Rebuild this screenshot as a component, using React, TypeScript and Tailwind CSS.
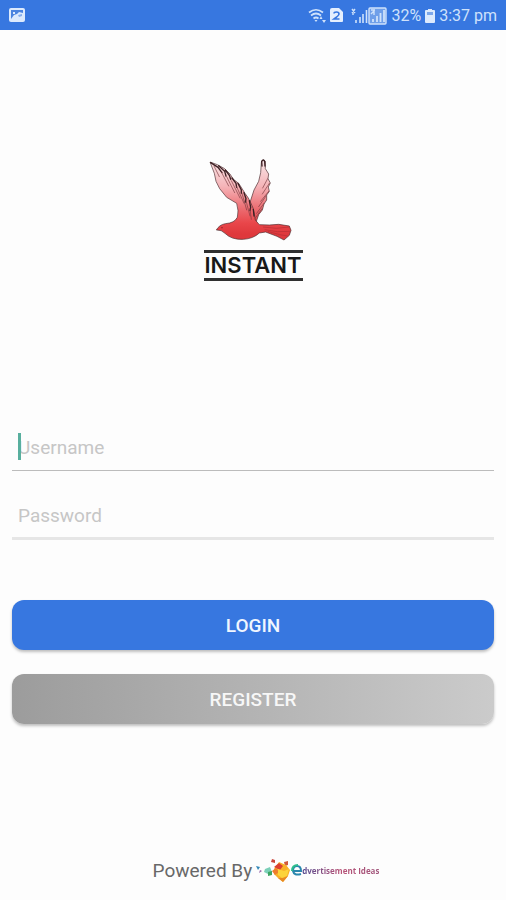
import React from "react";

function StatusBar() {
  return (
    <header className="flex h-[30px] items-center justify-between bg-[#3777e0] pt-0.5 pr-[9px] pl-[9px] text-[#cfe2fb]">
      <svg className="h-4 w-4" viewBox="0 0 16 16" role="img" aria-label="Screenshot saved">
        <rect x="0" y="0" width="16" height="14" rx="2" fill="#dceafd" />
        <path d="M2 2h12v3l-4-1-2 2-3 1-3 4z" fill="#4b84df" />
        <path d="M4 4h2v2H4z" fill="#dceafd" />
        <path d="M9 7l4-1v2l-3 1z" fill="#86aeec" />
      </svg>
      <div className="flex items-center gap-1">
        <svg className="h-4 w-[18px]" viewBox="0 0 18 16" fill="none" stroke="currentColor" role="img" aria-label="Wi-Fi">
          <path d="M1 4.500q7-5.500 14 0M3 7.500q5-4 10 0M5.500 10.500q2.500-2 5 0" strokeWidth="1.700" />
          <path d="M6.500 12h3L8 14z" fill="currentColor" stroke="none" />
          <path d="M11.500 11l1.500-3 1.500 3zM14 12h4l-2 3z" fill="currentColor" stroke="none" />
        </svg>
        <svg className="h-4 w-[13px]" viewBox="0 0 13 16" role="img" aria-label="SIM 2">
          <path d="M2 0h7l4 4v9a1 1 0 0 1-1 1H1a1 1 0 0 1-1-1V2a2 2 0 0 1 2-2z" fill="#e4effe" />
          <path d="M4 5.500Q4 4 6.500 4T9 6q0 1.500-5 5h5.500" fill="none" stroke="#3777e0" strokeWidth="1.600" />
        </svg>
        <svg className="ml-1 h-[18px] w-9" viewBox="0 0 36 18" fill="none" stroke="currentColor" role="img" aria-label="Mobile signal">
          <path d="M5 13v3M9 10v6M12 7v9M15.500 3v13" strokeWidth="1.600" />
          <path d="M1 2l3 4M4 2L1 6M2 6v2" strokeWidth="1.400" />
          <rect x="18" y="1" width="17" height="16" rx="1" fill="#6f9fe9" strokeWidth="1.400" />
          <path d="M22 12v3M26 9v6M29.500 6v9M33 3v12" strokeWidth="1.800" />
          <path d="M20 3h4M20 7l3-3v4" strokeWidth="1.400" />
        </svg>
        <span className="text-[16px] leading-5">32%</span>
        <svg className="h-[15px] w-[10px]" viewBox="0 0 10 15" role="img" aria-label="Battery">
          <path d="M3 0h4v1h2a1 1 0 0 1 1 1v11a1 1 0 0 1-1 1H1a1 1 0 0 1-1-1V2a1 1 0 0 1 1-1h2z" fill="#dceafd" />
          <path d="M2 3h6v3H2z" fill="#7ca7ea" />
        </svg>
        <span className="text-[16px] leading-5">3:37 pm</span>
      </div>
    </header>
  );
}

function Bird() {
  return (
    <svg className="h-[84px] w-[84px]" viewBox="45 22 252 252" role="img" aria-label="Flying bird">
      <defs>
        <linearGradient id="bird" x1="0" y1="30" x2="0" y2="250" gradientUnits="userSpaceOnUse">
          <stop offset="0" stopColor="#f9e6e7" />
          <stop offset="0.350" stopColor="#f5b4b8" />
          <stop offset="0.650" stopColor="#ec6d72" />
          <stop offset="0.850" stopColor="#e9464a" />
          <stop offset="1" stopColor="#df383c" />
        </linearGradient>
      </defs>
      <g fill="url(#bird)" stroke="#4a2a2e" strokeWidth="2" strokeLinejoin="round">
        <path d="M168 215L168 155L180 118L194 92L200 66L202 36Q206 22 214 32L214 54L224 70L222 84L229 97L223 109L226 122L218 133L218 148L210 160L205 178L194 192L186 215Z" />
        <path d="M67 238Q76 222 94 219Q122 217 130 200Q135 180 128 158L98 140L77 114L66 92L61 68L48 34L70 42L92 54L108 70L118 86L134 98L143 112L153 128L163 142L170 156L177 172L181 190L184 208L196 222L226 223L254 221L286 226L291 239L286 254L270 268L249 257L215 244L196 247Q178 264 148 266Q113 268 93 248Q83 237 67 238Z" />
      </g>
      <g fill="none" stroke="#3c2024" strokeWidth="4" strokeLinecap="round">
        <path d="M50 36L72 50L84 66M74 45L92 62L96 76M94 58L106 74L110 86M114 82L126 98L128 110M132 98L142 118L142 128M150 126L156 144L154 154M166 150L170 170L168 180M178 176L180 196" />
        <path d="M204 46L203 32Q208 24 212 32L213 46" />
      </g>
      <g fill="none" stroke="#7c3a40" strokeWidth="2" strokeLinecap="round">
        <path d="M60 46L76 78M82 64L104 106M98 78L122 126M112 90L138 142M128 108L150 158M144 128L158 178M156 150L168 196M168 174L172 206" />
        <path d="M221 84L206 112M226 98L205 130M224 122L200 152M216 136L194 168M210 158L188 188M204 174L184 202" />
      </g>
      <g fill="none" stroke="#b52d33" strokeWidth="2">
        <path d="M207 229L247 233L285 229M212 237L250 243L288 242M221 242L257 252L281 256" />
      </g>
      <circle cx="84" cy="231" r="2" fill="#7a1b20" />
    </svg>
  );
}

function Brand() {
  return (
    <div className="flex flex-col items-center">
      <div className="pr-1">
        <Bird />
      </div>
      <h1 className="mt-2 w-[99px] border-y-[3px] border-[#303030] text-center font-[Inter,sans-serif] text-[22px] leading-[25px] font-semibold whitespace-nowrap text-[#181818]">
        INSTANT
      </h1>
    </div>
  );
}

function VendorLogo() {
  return (
    <div className="flex items-center">
      <svg className="h-6 w-[46px]" viewBox="0 0 46 24" aria-hidden="true">
        <path d="M0 7l4 1-2 3z" fill="#3288b8" />
        <path d="M4 11l2 1-3 2z" fill="#9561a8" />
        <path d="M9 10l5-2 2 5-4 2-4-2z" fill="#7cd0b8" />
        <path d="M12 13l4-1v4l-4 1z" fill="#3da562" />
        <path d="M16 0l3 1v3l-4-1z" fill="#c9453a" />
        <path d="M28 3l4-1v4l-3 1z" fill="#d0583c" />
        <path d="M18 10l5-7 7 3 4 5-2 6-5 6-5-4-4-4z" fill="#f8b028" />
        <path d="M18 8l5-4 4 3-3 4z" fill="#dc4030" />
        <path d="M16 12l4-3 3 4-4 3z" fill="#ee7d2c" />
        <path d="M22 10l6 2 5-2-2 7-5 2-4-3z" fill="#fcd33a" />
        <path d="M22 19l5 4 5-6-5 2z" fill="#e88a22" />
        <path d="M38 12h7q0-5-4-5t-4 5q1 5 8 3" fill="none" stroke="#2a86ad" strokeWidth="2" />
        <path d="M36 12q0-6 6-6" fill="none" stroke="#2cbd8c" strokeWidth="2" />
      </svg>
      <span className="bg-linear-to-r from-[#534a91] via-[#b85277] to-[#a0567c] bg-clip-text font-['Open_Sans',sans-serif] text-[8px] leading-4 font-bold text-transparent">
        dvertisement Ideas
      </span>
    </div>
  );
}

export default function App() {
  return (
    <div className="flex min-h-screen flex-col bg-[#fdfdfd] font-[Roboto,sans-serif]">
      <StatusBar />
      <main className="flex grow flex-col px-3 pt-32">
        <Brand />
        <form className="mt-[142px] flex flex-col" onSubmit={(event) => event.preventDefault()}>
          <div className="relative">
            <input
              type="text"
              aria-label="Username"
              placeholder="Username"
              className="block h-12 w-full border-b border-[#bcbcbc] bg-transparent px-1.5 pt-0.5 text-[19px] leading-6 text-[#444] outline-none placeholder:text-[#c6c6c6]"
            />
            <span className="absolute top-2.5 left-1.5 h-[27px] w-[3px] bg-[#58af9e]" aria-hidden="true" />
          </div>
          <input
            type="password"
            aria-label="Password"
            placeholder="Password"
            className="mt-5 h-[49px] w-full border-b-[3px] border-[#e6e6e6] bg-transparent px-1.5 pt-0.5 text-[19px] leading-6 text-[#444] outline-none placeholder:text-[#c6c6c6]"
          />
          <button
            type="submit"
            className="mt-[60px] h-[50px] rounded-xl bg-[#3777e0] pt-0.5 text-[19px] leading-6 font-medium text-[#f0f6ff] shadow-[0_2px_3px_#00000040]"
          >
            LOGIN
          </button>
          <button
            type="button"
            className="mt-6 h-[50px] rounded-xl bg-linear-to-r from-[#9c9c9c] to-[#cbcbcb] pt-0.5 text-[19px] leading-6 font-medium text-[#f7f7f7] shadow-[0_2px_3px_#00000040]"
          >
            REGISTER
          </button>
        </form>
      </main>
      <footer className="flex items-center justify-center gap-1 pt-6 pb-[17px] pl-[26px]">
        <span className="text-[19px] leading-6 text-[#686868]">Powered By</span>
        <VendorLogo />
      </footer>
    </div>
  );
}
